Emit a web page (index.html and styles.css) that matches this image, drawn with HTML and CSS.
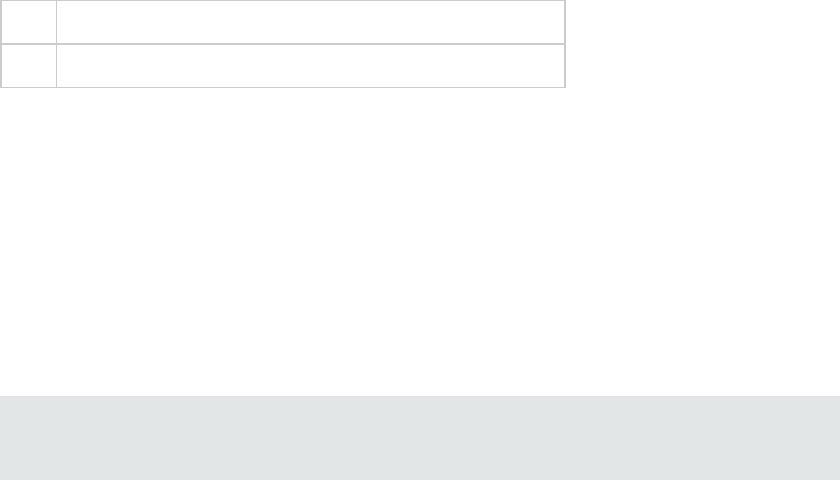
FILE: index.html
```html
<!DOCTYPE html>
<html lang="en">

<head>
    <meta charset="utf-8">
    <meta name="viewport" content="width=device-width, initial-scale=1.0">
    <title>Table</title>
    <link rel="stylesheet" href="styles.css">
</head>

<body>

    <main class="indhold">
        <table class="tabel">
            <tr class="raekke forste">
                <td class="nr"></td>
                <td class="tekst"></td>
            </tr>
            <tr class="raekke anden">
                <td class="nr"></td>
                <td class="tekst"></td>
            </tr>
        </table>
    </main>

    <footer class="bund"></footer>

</body>

</html>
```

FILE: styles.css
```css
html,
body {
    height: 100%;
}

body {
    margin: 0;
    display: flex;
    flex-direction: column;
    background-color: white;
    font-family: "Liberation Sans", Arial, sans-serif;
    font-size: 13px;
}

.indhold {
    flex: 1;
}

.tabel {
    border-collapse: separate;
    border-spacing: 0;
    border: 1px solid #cccccc;
    width: 566px;
}

.tabel td {
    padding: 0;
    height: 42px;
    border: 0 solid #cccccc;
}

.nr {
    width: 54px;
    border-left-width: 1px !important;
    border-right-width: 1px !important;
}

.tekst {
    border-right-width: 1px !important;
}

.forste td {
    border-bottom-width: 1px !important;
}

.anden td {
    border-top-width: 1px !important;
}

.bund {
    height: 84px;
    background-color: #e2e6e6;
}
```
